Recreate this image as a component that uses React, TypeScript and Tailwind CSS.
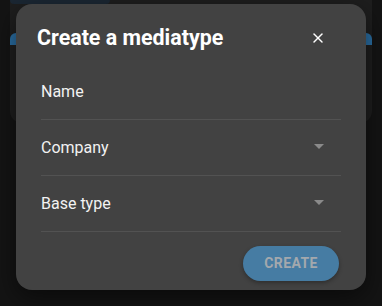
import { X } from "lucide-react";

function Field({ label, select }: { label: string; select?: boolean }) {
  return (
    <div className="h-[56px] flex items-center justify-between border-b border-[#525252] pr-[17px]">
      <span className="text-[16px] text-[#f2f2f2] pt-[1px]">{label}</span>
      {select && (
        <svg width="10" height="5" viewBox="0 0 10 5" className="mt-[-2px]">
          <path d="M0 0 L10 0 L5 5 Z" fill="#8a8a8a" />
        </svg>
      )}
    </div>
  );
}

export default function App() {
  return (
    <div
      className="relative w-[382px] h-[306px] overflow-hidden bg-[#141414]"
      style={{ fontFamily: "Roboto, 'Liberation Sans', sans-serif" }}
    >
      {/* page behind the dialog */}
      <div className="mx-[10px] -mt-[12px] h-[135px] rounded-[12px] bg-[#1e1e1e] pt-[12px]">
        <div className="w-[100px] h-[4px] rounded-b-[6px] bg-[#1b2733]" />
        <div className="mt-[29px] h-[12px] rounded-t-[6px] bg-[#2a6ea3]" />
      </div>

      {/* dialog */}
      <div className="absolute left-[16px] top-[4px] w-[350px] h-[286px] rounded-[16px] bg-[#424242] shadow-[0_8px_24px_rgba(0,0,0,0.5)] flex flex-col">
        <div className="flex items-start justify-between pl-[21px] pr-[40px] pt-[20px] h-[60px]">
          <h2 className="text-[21.4px] leading-[28px] font-bold text-white">Create a mediatype</h2>
          <X size={16} strokeWidth={2.2} className="text-white mt-[6px]" />
        </div>
        <div className="mx-[25px] flex flex-col">
          <Field label="Name" />
          <Field label="Company" select />
          <Field label="Base type" select />
        </div>
        <div className="flex justify-end pr-[27px] pt-[14px]">
          <button className="w-[96px] h-[35px] rounded-full bg-[#467ca3] text-[14px] font-bold text-[#a3a8ad] tracking-[0.4px] shadow-[0_2px_4px_rgba(0,0,0,0.3)]">
            CREATE
          </button>
        </div>
      </div>
    </div>
  );
}
